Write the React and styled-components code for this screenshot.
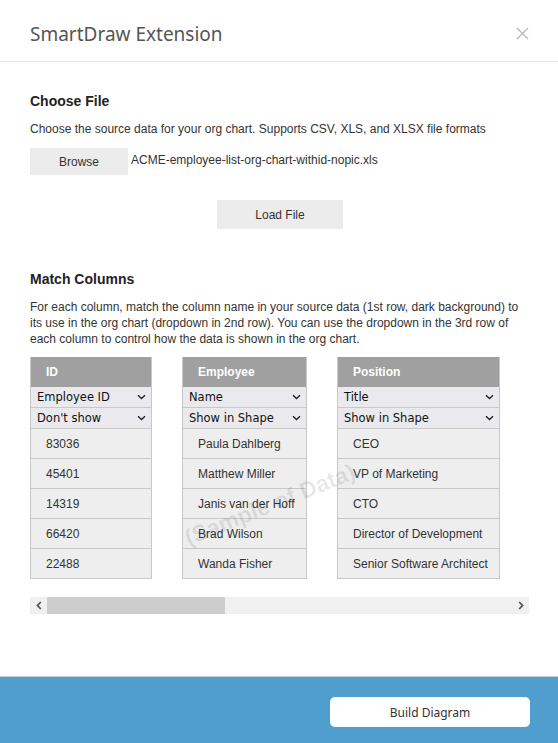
import React from "react";
import styled, { createGlobalStyle } from "styled-components";

const Global = createGlobalStyle`
  html, body { margin: 0; padding: 0; background: #fff; }
  body { font-family: "Liberation Sans", Arial, sans-serif; }
  * { box-sizing: border-box; }
`;

const Page = styled.div`
  width: 558px;
  height: 743px;
  display: flex;
  flex-direction: column;
  background: #fff;
  overflow: hidden;
`;

const Header = styled.div`
  height: 62px;
  flex: none;
  display: flex;
  align-items: center;
  justify-content: space-between;
  padding: 6px 29px 0 30px;
  border-bottom: 1px solid #e5e5e5;
`;

const Title = styled.div`
  font-family: "Noto Sans", "Open Sans", sans-serif;
  font-size: 19px;
  color: #555;
`;

const Close = styled.button`
  width: 14px;
  height: 14px;
  padding: 0;
  border: none;
  background: transparent;
  display: flex;
  align-items: center;
  justify-content: center;
  margin-top: -1px;
`;

const Main = styled.div`
  flex: 1;
  padding: 31px 29px 0 30px;
  color: #333;
  font-size: 12px;
`;

const Heading = styled.div`
  font-size: 14px;
  font-weight: bold;
  line-height: 16px;
  color: #222;
  margin-top: ${(p) => p.$mt || 0}px;
`;

const Text = styled.div`
  line-height: 16px;
  margin-top: 12px;
  color: #333;
`;

const FileRow = styled.div`
  display: flex;
  align-items: center;
  margin-top: 11px;
  gap: 3px;
`;

const GrayButton = styled.button`
  font-family: "Liberation Sans", Arial, sans-serif;
  font-size: 12px;
  color: #333;
  background: #ececec;
  border: none;
  width: ${(p) => p.$w}px;
  height: ${(p) => p.$h}px;
  padding: 0;
`;

const FileName = styled.span`
  margin-top: -3px;
`;

const Center = styled.div`
  display: flex;
  justify-content: center;
  margin-top: 25px;
  padding-left: 1px;
`;

const TableArea = styled.div`
  position: relative;
  margin-top: 10px;
  width: 470px;
`;

const Columns = styled.div`
  display: flex;
  gap: 30px;
`;

const Column = styled.div`
  width: ${(p) => p.$w}px;
  flex: none;
  border: 1px solid #c8c8c8;
  border-top: none;
`;

const ColHead = styled.div`
  height: 30px;
  background: #a0a0a0;
  color: #fff;
  font-weight: bold;
  font-size: 12px;
  display: flex;
  align-items: center;
  padding-left: 15px;
  padding-bottom: 1px;
`;

const Select = styled.div`
  height: 21px;
  background: #eaeaee;
  border-bottom: 1px solid #c8c8c8;
  display: flex;
  align-items: center;
  justify-content: space-between;
  padding: 0 5px 0 6px;
  font-family: "DejaVu Sans", Tahoma, sans-serif;
  font-size: 11.5px;
  color: #111;
`;

const Cell = styled.div`
  height: 30px;
  background: #eeeeee;
  border-bottom: 1px solid #c8c8c8;
  display: flex;
  align-items: center;
  padding-left: 15px;
  font-size: 12px;
  color: #333;
  white-space: nowrap;
  &:last-child { border-bottom: none; height: 29px; }
`;

const Watermark = styled.div`
  position: absolute;
  left: 240px;
  top: 148px;
  transform: translate(-50%, -50%) rotate(-22deg);
  font-size: 23px;
  font-weight: bold;
  color: rgba(0, 0, 0, 0.09);
  white-space: nowrap;
  pointer-events: none;
`;

const ScrollBar = styled.div`
  margin-top: 18px;
  width: 499px;
  height: 17px;
  background: #f0f0f0;
  display: flex;
  align-items: stretch;
`;

const ScrollArrow = styled.div`
  width: 17px;
  flex: none;
  display: flex;
  align-items: center;
  justify-content: center;
`;

const Track = styled.div`
  flex: 1;
  display: flex;
`;

const Thumb = styled.div`
  background: #cdcdcd;
`;

const Footer = styled.div`
  height: 67px;
  flex: none;
  background: #4f9ece;
  border-top: 1px solid #cfcfcf;
  display: flex;
  justify-content: flex-end;
  align-items: flex-start;
  padding: 20px 28px 0 0;
`;

const BuildButton = styled.button`
  width: 200px;
  height: 30px;
  background: #fff;
  border: none;
  border-radius: 5px;
  font-family: "Noto Sans", "Open Sans", sans-serif;
  font-size: 12px;
  color: #333;
`;

const Chevron = () => (
  <svg width="9" height="6" viewBox="0 0 9 6">
    <path d="M1 1.2 L4.5 4.5 L8 1.2" fill="none" stroke="#222" strokeWidth="1.4" />
  </svg>
);

const columns = [
  { head: "ID", w: 122, map: "Employee ID", show: "Don't show", rows: ["83036", "45401", "14319", "66420", "22488"] },
  { head: "Employee", w: 125, map: "Name", show: "Show in Shape", rows: ["Paula Dahlberg", "Matthew Miller", "Janis van der Hoff", "Brad Wilson", "Wanda Fisher"] },
  { head: "Position", w: 163, map: "Title", show: "Show in Shape", rows: ["CEO", "VP of Marketing", "CTO", "Director of Development", "Senior Software Architect"] },
];

export default function App() {
  return (
    <Page>
      <Global />
      <Header>
        <Title>SmartDraw Extension</Title>
        <Close aria-label="close">
          <svg width="13" height="13" viewBox="0 0 13 13">
            <path d="M1 1 L12 12 M12 1 L1 12" stroke="#bdbdbd" strokeWidth="1.5" />
          </svg>
        </Close>
      </Header>
      <Main>
        <Heading>Choose File</Heading>
        <Text>Choose the source data for your org chart. Supports CSV, XLS, and XLSX file formats</Text>
        <FileRow>
          <GrayButton $w={98} $h={27}>Browse</GrayButton>
          <FileName>ACME-employee-list-org-chart-withid-nopic.xls</FileName>
        </FileRow>
        <Center>
          <GrayButton $w={126} $h={29}>Load File</GrayButton>
        </Center>
        <Heading $mt={42}>Match Columns</Heading>
        <Text>
          For each column, match the column name in your source data (1st row, dark background) to its use in the org chart (dropdown in 2nd row). You can use the dropdown in the 3rd row of each column to control how the data is shown in the org chart.
        </Text>
        <TableArea>
          <Columns>
            {columns.map((c) => (
              <Column key={c.head} $w={c.w}>
                <ColHead>{c.head}</ColHead>
                <Select>
                  <span>{c.map}</span>
                  <Chevron />
                </Select>
                <Select>
                  <span>{c.show}</span>
                  <Chevron />
                </Select>
                {c.rows.map((r, i) => (
                  <Cell key={i}>{r}</Cell>
                ))}
              </Column>
            ))}
          </Columns>
          <Watermark>(Sample of Data)</Watermark>
        </TableArea>
        <ScrollBar>
          <ScrollArrow>
            <svg width="6" height="9" viewBox="0 0 6 9">
              <path d="M4.8 1 L1.5 4.5 L4.8 8" fill="none" stroke="#555" strokeWidth="1.8" />
            </svg>
          </ScrollArrow>
          <Track>
            <Thumb style={{ width: 178 }} />
          </Track>
          <ScrollArrow>
            <svg width="6" height="9" viewBox="0 0 6 9">
              <path d="M1.2 1 L4.5 4.5 L1.2 8" fill="none" stroke="#555" strokeWidth="1.8" />
            </svg>
          </ScrollArrow>
        </ScrollBar>
      </Main>
      <Footer>
        <BuildButton>Build Diagram</BuildButton>
      </Footer>
    </Page>
  );
}
